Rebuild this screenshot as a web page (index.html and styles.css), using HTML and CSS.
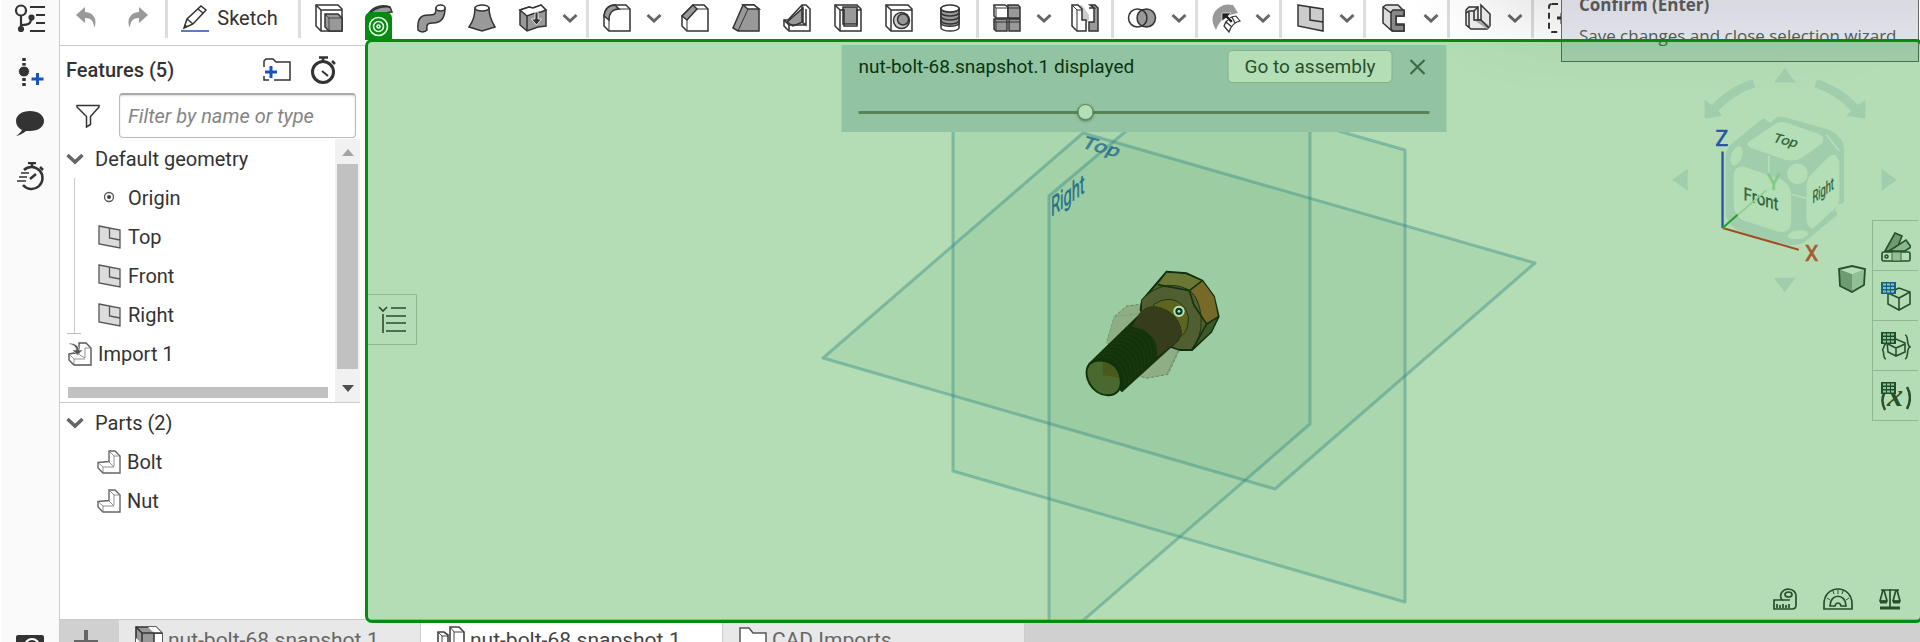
FILE: index.html
```html
<!DOCTYPE html>
<html lang="en">
<head>
<meta charset="utf-8">
<title>nut-bolt-68.snapshot.1</title>
<link rel="stylesheet" href="styles.css">
</head>
<body>
<svg class="defs" aria-hidden="true">
  <symbol id="chev" viewBox="0 0 16 10"><path d="M1.500 2l6.500 6 6.500-6" fill="none" stroke="#666" stroke-width="3"/></symbol>
  <symbol id="fold" viewBox="0 0 18 12"><path d="M1.500 2l7.500 7 7.500-7" fill="none" stroke="#666" stroke-width="3.500"/></symbol>
  <symbol id="plane" viewBox="0 0 24 24"><path d="M1 1l21 4v18l-21-4z" fill="#dcdcdc" stroke="#555" stroke-width="1.300"/><path d="M11.500 3v10l10.500 2" fill="none" stroke="#555" stroke-width="1.300"/></symbol>
  <symbol id="part" viewBox="0 0 24 24"><path d="M1 12.500l11-1V1h6l5 5v17H6l-5-5z" fill="#fff" stroke="#666" stroke-width="1.400"/><path d="M12 1l5 5h6M17 6v10M1 12.500L6 17v6M6 17h11l-5-5" fill="none" stroke="#777" stroke-width=".8"/></symbol>
  <symbol id="grid" viewBox="0 0 15 12"><path d="M0 0h15v12H0z" fill="currentColor"/><path d="M2 1.500h3v2H2zM6 1.500h3v2H6zM10 1.500h3v2h-3zM2 5h3v2H2zM6 5h3v2H6zM10 5h3v2h-3zM2 8.500h3v2H2zM6 8.500h3v2H6zM10 8.500h3v2h-3z" fill="#8dc4a0"/></symbol>
</svg>

<div class="app">
  <nav class="rail" aria-label="Document panels">
    <button class="rail-btn" aria-label="Versions and history"><svg width="32" height="30" viewBox="0 0 32 30" fill="none" stroke="#333" stroke-width="2.200"><circle cx="7" cy="7.500" r="5"/><path d="M7 12.500V25M7 22c9 0 10-2 10-7M16 4h15M22 12h9M22 20h9M16 28h15"/><circle cx="7" cy="26" r="2" fill="#333"/><circle cx="17.500" cy="14.500" r="2" fill="#333"/></svg></button>
    <button class="rail-btn" aria-label="Insert"><svg width="32" height="30" viewBox="0 0 32 30"><path d="M10 2v28" stroke="#333" stroke-width="3.500" stroke-dasharray="3 2"/><circle cx="10" cy="15.500" r="5.500" fill="#333" stroke="#fafafa"/><path d="M23.500 17v12M17.500 23h12" stroke="#1b53b5" stroke-width="3"/></svg></button>
    <button class="rail-btn" aria-label="Comments"><svg width="32" height="30" viewBox="0 0 32 30"><path d="M16 2c8 0 14 4 14 10s-6 10-14 10h-4c-3 2.500-6 4-10 5 3-2 5-4 6-6-4-2-6-5-6-9C2 6 8 2 16 2z" fill="#333"/></svg></button>
    <button class="rail-btn" aria-label="Performance"><svg width="32" height="30" viewBox="0 0 32 30" fill="none" stroke="#333" stroke-width="2.500"><path d="M10 8a11 11 0 1 1-1 15"/><path d="M14 1h8M18 1v4M26 5l3 3M16 17l6-5" /><path d="M7 11h8M5 15h8M3 19h9" stroke-width="1.500"/></svg></button>
    <button class="rail-btn rail-last" aria-label="Search"><svg width="28" height="28" viewBox="0 0 28 28"><rect width="28" height="28" rx="2" fill="#333"/><circle cx="16" cy="11" r="7" fill="none" stroke="#fff" stroke-width="2"/></svg></button>
  </nav>

  <div class="main">
    <header class="toolbar">
      <button class="tool" aria-label="Undo"><svg width="28" height="28" viewBox="0 0 28 28"><path d="M4 11l9-8v5c9 0 13 9 9 16 0-7-3-10-9-10v5z" fill="#999"/></svg></button>
      <button class="tool redo" aria-label="Redo"><svg width="28" height="28" viewBox="0 0 28 28"><path d="M24 11l-9-8v5c-9 0-13 9-9 16 0-7 3-10 9-10v5z" fill="#999"/></svg></button>
      <span class="sep"></span>
      <button class="sketch"><svg width="28" height="28" viewBox="0 0 28 28"><path d="M3 24l3-9L20 2l5 4-13 14zM6 15l6 5M17 5l5 4" fill="#fff" stroke="#333" stroke-width="1.500"/><path d="M3 24l1-4 2 2z" fill="#333"/><path d="M0 27h28" stroke="#1b53b5" stroke-width="1.500"/></svg>Sketch</button>
      <span class="sep"></span>
      <button class="tool" aria-label="Extrude"><svg class="ic" viewBox="0 0 28 28"><path d="M1 1h22l4 4v22H6l-5-5z" fill="#fff"/><path d="M1 1l5 5v21M6 6h21"/><path d="M10 10h13l4 4v13H14l-4-4z" fill="#999"/><path d="M10 10l4 4v13M14 14h13" stroke-width=".8"/></svg></button>
      <button class="tool" aria-label="Revolve"><svg class="ic" viewBox="0 0 28 28"><path d="M1 15C2 5 14-1 24 3l2 5c-7 0-9 3-10 8z" fill="#999"/><path d="M2 11c6-7 13-9 22-8"/></svg></button>
      <button class="tool" aria-label="Sweep"><svg class="ic" viewBox="0 0 28 28"><path d="M19 4c0 7-2 7-8 7C3 11 0 16 1 26c2 2.500 7 2.500 9 0-1-6 1-7 6-7 8 0 12-5 12-15z" fill="#999"/><ellipse cx="23.500" cy="4" rx="4.500" ry="3" fill="#fff"/></svg></button>
      <button class="tool" aria-label="Loft"><svg class="ic" viewBox="0 0 28 28"><path d="M7 4c0 9-3 15-6 19l13 4 13-4c-3-5-6-11-6-19z" fill="#999"/><ellipse cx="14" cy="4" rx="7" ry="3" fill="#fff"/></svg></button>
      <button class="tool" aria-label="Thicken"><svg class="ic" viewBox="0 0 28 28"><path d="M1 6l9-3 4 1 8-3 5 5v16l-8 1-11 4-7-6z" fill="#999"/><path d="M1 6l9-3 4 1 8-3 5 5-5 2-6 1-8 3z" fill="#fff"/><path d="M8 12v15"/><path d="M16 8h3v7h3.500l-5 6-5-6H16z" fill="#333" stroke="#fff" stroke-width=".8"/></svg></button>
      <button class="more" aria-label="More solid tools"><svg width="16" height="10"><use href="#chev"/></svg></button>
      <span class="sep"></span>
      <button class="tool" aria-label="Fillet"><svg class="ic" viewBox="0 0 28 28"><path d="M1 12C2 5 6 1 12 1h11l4 4v22H6l-5-5z" fill="#fff"/><path d="M1 12C2 5 6 1 12 1l4 4C10 5 6 9 6 16z" fill="#999"/><path d="M16 5h11M6 16v11" stroke-width="1"/></svg></button>
      <button class="more" aria-label="More edge tools"><svg width="16" height="10"><use href="#chev"/></svg></button>
      <button class="tool" aria-label="Chamfer"><svg class="ic" viewBox="0 0 28 28"><path d="M1 12L12 1h11l4 4v22H6l-5-5z" fill="#fff"/><path d="M1 12L12 1l4 4L6 16z" fill="#999"/><path d="M16 5h11M6 16v11" stroke-width="1"/></svg></button>
      <button class="tool" aria-label="Draft"><svg class="ic" viewBox="0 0 28 28"><path d="M1 24L11 1h11l5 4v22H6z" fill="#999"/><path d="M11 1l5 4h11l-5-4z" fill="#fff"/><path d="M16 5L6 27" stroke-width="1"/></svg></button>
      <button class="tool" aria-label="Rib"><svg class="ic" viewBox="0 0 28 28"><path d="M1 16h4L19 1h4l4 4v22H6l-5-5z" fill="#fff"/><path d="M4 18L20 4v14l-10 4z" fill="#999"/><path d="M19 1v17l4 3V5M1 16l5 5h17M6 21v6"/></svg></button>
      <button class="tool" aria-label="Shell"><svg class="ic" viewBox="0 0 28 28"><path d="M1 1h22l4 4v22H6l-5-5z" fill="#fff"/><path d="M9 3h14v17H9z" fill="#999"/><path d="M1 1l5 5v21M6 6h4v16h13V6h4M10 22V5"/></svg></button>
      <button class="tool" aria-label="Hole"><svg class="ic" viewBox="0 0 28 28"><path d="M1 1h22l4 4v22H6l-5-5z" fill="#fff"/><path d="M1 1l5 5v21M6 6h21"/><circle cx="16.500" cy="16.500" r="8" fill="#ccc"/><circle cx="18" cy="15.500" r="5.500" fill="#999"/></svg></button>
      <button class="tool" aria-label="External thread"><svg class="ic" viewBox="0 0 28 28"><path d="M5 5v19c2 4 16 4 18 0V5z" fill="#fff"/><path d="M5 5c3 4 15 4 18 0v15c-3 3-15 3-18 0z" fill="#999"/><ellipse cx="14" cy="4.500" rx="9" ry="3.500" fill="#fff"/><path d="M5 9c3 4 15 4 18 0M5 13c3 4 15 4 18 0M5 17c3 4 15 4 18 0"/></svg></button>
      <span class="sep"></span>
      <button class="tool" aria-label="Linear pattern"><svg class="ic" viewBox="0 0 28 28"><path d="M1 1h11l3 2v11H3l-2-2z" fill="#fff"/><path d="M15 1h10l2 2v11H15zM1 15h13v12H3l-2-2zM16 15h11v12H16z" fill="#999"/><path d="M1 1l2 3h11M3 4v10M15 4h12M1 15l2 3h24M3 18v9" stroke-width="1"/></svg></button>
      <button class="more" aria-label="More pattern tools"><svg width="16" height="10"><use href="#chev"/></svg></button>
      <button class="tool" aria-label="Mirror"><svg class="ic" viewBox="0 0 28 28"><path d="M9 1h2l7 10V4v12l-4 5-4-4z" fill="#ccc" stroke="none"/><path d="M1 1h6l4 4v11h4v11H6l-5-5z" fill="#fff"/><path d="M1 1l5 5v21M6 6h5" stroke-width="1"/><path d="M18 4h5l-4-3h5l3 3v23h-9v-9h5V4z" fill="#999"/></svg></button>
      <span class="sep"></span>
      <button class="tool" aria-label="Boolean"><svg class="ic" viewBox="0 0 28 28"><circle cx="18.500" cy="14" r="9" fill="#999"/><circle cx="9.500" cy="14" r="9" fill="#fff"/><path d="M14 6a9 9 0 0 1 0 16 9 9 0 0 1 0-16z" fill="#999"/></svg></button>
      <button class="more" aria-label="More boolean tools"><svg width="16" height="10"><use href="#chev"/></svg></button>
      <span class="sep"></span>
      <button class="tool" aria-label="Move face"><svg class="ic" viewBox="0 0 28 28"><path d="M4 26C-2 16 0 8 8 3c4-3 8-3 13-2l5 8-8 2c-7 3-11 7-14 15z" fill="#999" stroke="none"/><path d="M12 22c2-6 7-10 12-10l4 5c-5 1-9 5-11 11zM20 13l3 6M14 18l6 5" fill="#fff" stroke-width="1.200"/><path d="M10 9h9l-3 3 5 5-2 2-5-5-4 3z" fill="#222" stroke="#fff" stroke-width=".6"/></svg></button>
      <button class="more" aria-label="More face tools"><svg width="16" height="10"><use href="#chev"/></svg></button>
      <span class="sep"></span>
      <button class="tool" aria-label="Plane"><svg class="ic" viewBox="0 0 28 28"><path d="M2 1l25 4v22L2 22z" fill="#ccc"/><path d="M14 3v13l13 2"/></svg></button>
      <button class="more" aria-label="More construction tools"><svg width="16" height="10"><use href="#chev"/></svg></button>
      <span class="sep"></span>
      <button class="tool" aria-label="Frame"><svg class="ic" viewBox="0 0 28 28"><path d="M3 3l3-2h12l6 6v5h-8v8h8v7H12l-9-8z" fill="#ddd"/><path d="M11 8l2-2h11v6h-8v9h8v6H13l-2-2z" fill="#888"/><path d="M3 3l8 6"/></svg></button>
      <button class="more" aria-label="More frame tools"><svg width="16" height="10"><use href="#chev"/></svg></button>
      <span class="sep"></span>
      <button class="tool" aria-label="Sheet metal"><svg class="ic" viewBox="0 0 28 28"><path d="M2 6l3-3h9v13h3V1l9 9v12l-3 3H7l-5-4z" fill="#eee"/><path d="M10 16h7l9 6-3 3z" fill="#aaa" stroke="none"/><path d="M14 3l-4 4H5l-3 2M5 8v16M10 7v9h7l8 8"/></svg></button>
      <button class="more" aria-label="More sheet metal tools"><svg width="16" height="10"><use href="#chev"/></svg></button>
      <span class="sep"></span>
      <button class="tool" aria-label="Custom feature"><svg class="ic" viewBox="0 0 28 28"><rect x="1" y="0" width="28" height="28" rx="3" stroke-width="2" stroke-dasharray="6 4"/><path d="M9 14h12M14 9v11" stroke-width="3"/></svg></button>
    </header>

    <div class="work">
      <aside class="panel">
        <div class="features">
          <div class="phead"><h2>Features (5)</h2>
            <button aria-label="Add folder"><svg width="28" height="24" viewBox="0 0 28 24"><path d="M1 9V3l2-2h7l3 3h14v18H11M1 18v4h5" fill="none" stroke="#333" stroke-width="1.500"/><path d="M8 8v12M2 14h12" stroke="#1b53b5" stroke-width="3"/></svg></button>
            <button aria-label="Regeneration times"><svg width="28" height="28" viewBox="0 0 28 28" fill="none" stroke="#333" stroke-width="3"><circle cx="14" cy="16" r="10.500"/><path d="M10 1.500h9M14 1v4M23 5l3 3" stroke-width="2.500"/><path d="M13 15l6 5" stroke-width="2"/></svg></button>
          </div>
          <div class="filter">
            <svg width="24" height="24" viewBox="0 0 24 24"><path d="M1 1.500h22v1.500l-8.500 9.500v8l-4 2.500V12.500L1 3z" fill="#fff" stroke="#333" stroke-width="1.500"/></svg>
            <input type="text" aria-label="Filter features" placeholder="Filter by name or type">
          </div>
          <div class="treebox">
            <div class="treecol">
              <ul class="tree">
                <li class="row top"><svg width="18" height="12"><use href="#fold"/></svg>Default geometry</li>
                <li class="branch"><ul>
                  <li class="row"><svg width="24" height="24" viewBox="0 0 24 24"><circle cx="11" cy="11" r="4.500" fill="none" stroke="#555" stroke-width="1.300"/><circle cx="11" cy="11" r="2" fill="#444"/></svg>Origin</li>
                  <li class="row"><svg width="24" height="24"><use href="#plane"/></svg>Top</li>
                  <li class="row"><svg width="24" height="24"><use href="#plane"/></svg>Front</li>
                  <li class="row"><svg width="24" height="24"><use href="#plane"/></svg>Right</li>
                </ul></li>
                <li class="row import"><svg width="24" height="24" viewBox="0 0 24 24"><path d="M1 12l5-1 5 1V1h7l5 5v17H6l-5-5z" fill="#fff" stroke="#555" stroke-width="1.400"/><path d="M17 6v10l-5-3M17 6h6M1 12l5 5h11M6 17v6" fill="none" stroke="#777" stroke-width=".8"/><path d="M1 1c6 0 10 3 10 7h4l-5.500 5L4 8h4c0-3-2-5-7-6z" fill="#555" stroke="#fff" stroke-width=".6"/></svg>Import 1</li>
              </ul>
              <div class="hbar"></div>
            </div>
            <div class="vbar"><svg width="12" height="7"><path d="M6 0l6 7H0z" fill="#a3a3a3"/></svg><span></span><svg width="12" height="7"><path d="M6 7l6-7H0z" fill="#505050"/></svg></div>
          </div>
        </div>
        <ul class="tree">
          <li class="row top"><svg width="18" height="12"><use href="#fold"/></svg>Parts (2)</li>
          <li class="row kid"><svg width="24" height="24"><use href="#part"/></svg>Bolt</li>
          <li class="row kid"><svg width="24" height="24"><use href="#part"/></svg>Nut</li>
        </ul>
      </aside>

      <main class="view">
        <svg class="scene" viewBox="368 42 1552 578" preserveAspectRatio="xMidYMid slice">
          <g fill="#5a9a70" fill-opacity=".09" stroke="#2f8585" stroke-opacity=".4" stroke-width="3" stroke-linejoin="round">
            <path d="M953 100h265l187 50v452L953 471z" stroke="none"/>
            <path d="M1300 120l105 30v452L953 471V120" fill="none"/>
            <path d="M1083 133l452 130-260 226-452-131z"/>
            <path d="M1310 100v324L1049 650V196l102-86"/>
          </g>
          <g class="lab" fill="#26708a" stroke="#26708a" stroke-width=".5">
            <text transform="matrix(1.150 .32 -.5 .8 1080 147)" font-size="19" fill="#3f8794">Top</text>
            <text transform="matrix(.540 -.4 0 1 1051 217)" font-size="27">Right</text>
          </g>
          <g transform="translate(1060 250) scale(.3333)">
            <path d="M163 200l37-32 100-12 66 52 2 70-44 95-65 12-60-20-58-90z" fill="#8fae86" stroke="#4b6b48" stroke-width="2" stroke-dasharray="10 5"/>
            <path d="M163 200l-20 70M163 200l75-8 100 20 30 60-48 100" fill="none" stroke="#6f9670" stroke-width="2"/>
            <path d="M143 270l20-70 75-8-100 90z" fill="#8fae86"/>
            <path d="M320 65l60 5 47 22 35 48 14 60-22 45-58 55h-35l-60-20-59-100 4-28z" fill="#535f2c" stroke="#0f3010" stroke-width="6" stroke-linejoin="round"/>
            <path d="M320 68l57 5 47 20-36 28-92-18z" fill="#6b7835"/><path d="M427 93l35 48 12 60-35 20-40-55-10-44z" fill="#776a28"/>
            <path d="M438 224l34-20-20 42-56 50z" fill="#3d5928"/>
            <path d="M245 150c50-55 110-50 144-28 40 30 50 130 5 176l-40-2-50-20-57-100z" fill="#515e31"/>
            <path d="M245 150c50-55 110-50 144-28 40 30 50 130 5 176" fill="none" stroke="#18370f" stroke-width="3"/>
            <path d="M294 104l94 18 39-30M388 122l14 44 38 56-42 75M440 222l36-22" fill="none" stroke="#14340f" stroke-width="5"/>
            <path d="M280 165c40-30 90-20 105 35 0 40-10 50-30 65z" fill="#5f6420" stroke="#1d380d" stroke-width="3"/>
            <path d="M86 340l170-165c40-20 105 15 110 75l-10 22-170 155z" fill="#12330c"/>
            <path d="M238 190l18-15c40-20 105 15 110 75l-15 25-60 45c5-50-20-80-75-90z" fill="#373d1c"/>
            <g fill="none" stroke="#203f13" stroke-width="2"><path d="M105 325c50-20 95 20 90 85M115 315c50-20 95 20 90 85M125 305c50-20 95 20 90 85M135 295c50-20 95 20 90 85M145 285c50-20 95 20 90 85M155 275c50-20 95 20 90 85M165 265c50-20 95 20 90 85M175 255c50-20 95 20 90 85M185 245c50-20 95 20 90 85M195 235c50-20 95 20 90 85"/></g>
            <path d="M88 342c25-20 75-12 90 30 15 45-10 65-35 64-45 0-80-60-55-94z" fill="#4a6930" stroke="#0e3209" stroke-width="6"/>
            <path d="M128 335c30 4 47 25 50 48l-50-8z" fill="#48591a"/>
            <circle cx="357" cy="184" r="14" fill="#123a18" stroke="#b7e3c5" stroke-width="6"/><circle cx="357" cy="184" r="4" fill="#b7e3c5"/>
          </g>
        </svg>

        <div class="badge"><svg width="21" height="21" viewBox="0 0 21 21" fill="none" stroke="#e9ffe9" stroke-width="1.600"><circle cx="10.500" cy="10.500" r="9"/><circle cx="10.500" cy="10.500" r="5"/><circle cx="10.500" cy="10.500" r="1.500"/></svg></div>

        <section class="notice">
          <div class="nrow"><span>nut-bolt-68.snapshot.1 displayed</span><button class="go">Go to assembly</button><button class="close" aria-label="Close"><svg width="16" height="16" viewBox="0 0 16 16"><path d="M1 1l14 14M15 1L1 15" stroke="#3d6b48" stroke-width="2.200"/></svg></button></div>
          <input type="range" aria-label="Snapshot position" min="0" max="200" value="79">
        </section>

        <button class="listbtn" aria-label="Show feature list"><svg width="28" height="28" viewBox="0 0 28 28" fill="none" stroke="#27502b" stroke-width="1.600"><path d="M1 1l4 4 4-4M13 2h15M8 10h20M8 17h20M8 25h20M5 8v19"/></svg></button>

        <svg class="cube" viewBox="0 0 700 700" aria-label="View cube">
          <g fill="#a0ceac">
            <path d="M435 54l33 44h-66zM435 728l33-44h-66zM97 390l46-33v66zM772 390l-46-33v66z"/>
            <path d="M338 88l8 24c-45 15-75 35-110 70l10 16-52 8V150l22 15c35-37 75-62 122-77zM532 88l-8 24c45 15 75 35 110 70l-14 16 57 8V150l-22 15c-35-37-75-62-123-77z"/>
            <path d="M365 208q10-6 18 7l12 3q12-22 40-16l125 35q50 18 53 60v155q0 10-20 12l-7 18q10 6 4 16l-95 78q-22 14-55 8l-130-35q-48-18-53-60V320q2-25 20-40z"/>
          </g>
          <g fill="#b4deb6">
            <path d="M338 268l70-47q15-8 35-2l90 32q30 12 10 32l-55 40q-22 14-55 6l-95-33q-30-12 0-28z"/>
            <path d="M310 350q-28 0-28 28v90q2 35 32 45l100 32q38 8 40-28v-82q-2-35-35-48z"/>
            <path d="M588 316q-12-4-24 8l-45 45q-19 18-19 42v95q2 28 20 30l65-60q14-14 14-34V335z"/>
            <circle cx="473" cy="372" r="31"/><ellipse cx="290" cy="318" rx="16" ry="30" transform="rotate(20 290 318)"/><ellipse cx="474" cy="555" rx="31" ry="13" transform="rotate(-8 474 555)"/>
          </g>
          <path d="M387 318v50M457 434l42 11M560 255l38 48" stroke="#b4deb6" stroke-width="5"/>
          <g class="lab" fill="#31623b" stroke="#31623b" stroke-width="1">
            <text transform="matrix(.8 .2 -.35 .65 396 275)" font-size="54">Top</text>
            <text transform="matrix(.84 .26 0 1 311 450)" font-size="54">Front</text>
            <text transform="matrix(.54 -.38 0 1 518 462)" font-size="52">Right</text>
          </g>
          <path d="M248 535V305" stroke="#2a53a4" stroke-width="7"/><path d="M248 535l229 65" stroke="#a14e25" stroke-width="6"/>
          <path d="M248 535l132-114" stroke="#8fd08e" stroke-width="5"/><path d="M248 535l45-40" stroke="#25a02b" stroke-width="6"/>
          <g class="lab" font-size="64" stroke-width="2"><text x="227" y="288" fill="#2a53a4" stroke="#2a53a4">Z</text><text x="382" y="420" fill="#83cb85" stroke="#83cb85">Y</text><text x="496" y="634" fill="#a85a32" stroke="#a85a32">X</text></g>
        </svg>

        <button class="shade" aria-label="Shaded view"><svg width="28" height="28" viewBox="0 0 28 28"><path d="M1 4l13 5v18L2 21z" fill="#6f9b70"/><path d="M27 4L14 9v18l12-7z" fill="#92bf94"/><path d="M1 4l13-3 13 3-13 5z" fill="#b4deb6"/><path d="M1 4l13-3 13 3-1 16-12 7-12-6z" fill="none" stroke="#27502b" stroke-width="1.800"/></svg></button>

        <div class="side">
          <button aria-label="Appearances"><svg class="gi" viewBox="0 0 30 30"><path d="M4 19L14 1l7 3-6 15z" fill="#6f9b70"/><path d="M8 19l17-11 5 7-6 4z" fill="#8ab88d"/><rect x="1" y="20" width="28" height="9" rx="1.500"/><path d="M11 20h9v9h-9z" fill="#92bf94" stroke-width=".8"/><circle cx="5.500" cy="24.500" r="1.500"/></svg></button>
          <button aria-label="Configurations"><svg class="gi blue" viewBox="0 0 30 30"><path d="M7 11l11-5 11 4v12l-11 6-11-6zM7 11l11 5 11-6M18 16v12"/><use href="#grid" width="15" height="12"/></svg></button>
          <button aria-label="Configured features"><svg class="gi" viewBox="0 0 30 30"><path d="M6 10l9-3 9 4v9l-9 4-8-4zM7 12l8 4 9-4M15 16v8M5 12c-3 0-1 5-4 6 3 0 0 8 4 9M24 3c4 0 1 10 5 12-4 1-1 11-5 12"/><use href="#grid" width="15" height="12"/></svg></button>
          <button aria-label="Variables"><svg class="gi" viewBox="0 0 30 30"><path d="M4 10c-4 6-3 12 0 18M26 5c4 7 4 14 0 22" stroke-width="2.500"/><text x="6" y="24">x</text><use href="#grid" width="15" height="12"/></svg></button>
        </div>

        <div class="measure">
          <button aria-label="Measure"><svg class="mi" width="24" height="22" viewBox="0 0 24 22"><path d="M1 12h8c-3-4-1-10 6-11 6 0 8 4 8 7v9q0 4-4 4H1z"/><ellipse cx="15.500" cy="6.500" rx="3.500" ry="2.500"/><path d="M4 20v-4M7 20v-3M10 20v-4M13 20v-3M16 20v-4M9 12h8"/></svg></button>
          <button aria-label="Angle"><svg class="mi" width="30" height="22" viewBox="0 0 30 22"><path d="M1 21v-5C1-4 29-4 29 16v5zM7 18c0-13 16-13 16 0H18c-1-4-5-4-6 0z"/><path d="M15 2v4M10 3l1 3M20 3l-1 3M4 10l3 2M26 10l-3 2" stroke-width="1"/></svg></button>
          <button aria-label="Mass properties"><svg class="mi" width="22" height="22" viewBox="0 0 22 22"><path d="M2 2h18M11 1v18M4 2L1 13h7L5 2M17 2l-3 11h7L18 2"/><path d="M1 14h7M14 14h7M1 20h20" stroke-width="3"/></svg></button>
        </div>
      </main>
    </div>

    <footer class="tabs">
      <button class="add" aria-label="Add tab"><svg width="24" height="24" viewBox="0 0 24 24"><path d="M12 0v24M0 12h24" stroke="#666" stroke-width="4"/></svg></button>
      <a class="tab" href="#assembly"><svg width="28" height="28" viewBox="0 0 28 28"><path d="M1 1h20l6 6v20H7l-6-6z" fill="#999" stroke="#333" stroke-width="1.600"/><path d="M13 1h8l6 6h-8zM19 8h8v19h-8zM1 12l6 6v9l-6-6z" fill="#fff"/><path d="M1 1l6 6h20M7 7v20M19 7v20" fill="none" stroke="#333" stroke-width="1.500"/></svg>nut-bolt-68.snapshot.1</a>
      <a class="tab on" href="#part"><svg width="28" height="28" viewBox="0 0 28 28"><path d="M1 6h6l4 3v18H5l-4-4zM13 1h9l5 5v21H16l-3-3z" fill="#fff" stroke="#444" stroke-width="1.600"/><path d="M1 6l4 4v17M13 1l4 5v21M17 6h10M5 10h6M11 17h4" fill="none" stroke="#444"/></svg>nut-bolt-68.snapshot.1</a>
      <a class="tab" href="#imports"><svg width="28" height="26" viewBox="0 0 28 26"><path d="M1 25V1h9l4 5h13v19z" fill="#fff" stroke="#555" stroke-width="1.500"/></svg>CAD Imports</a>
    </footer>
  </div>
  <div class="tip" role="tooltip"><strong>Confirm (Enter)</strong><span>Save changes and close selection wizard.</span></div>
</div>
</body>
</html>
```
FILE: styles.css
```css
* { box-sizing: border-box; }
body { margin: 0; font: 20px/24px Roboto, "Liberation Sans", sans-serif; color: #333; overflow: hidden; background: #fff; }
button { border: 0; padding: 0; margin: 0; background: none; font: inherit; color: inherit; display: flex; align-items: center; justify-content: center; }
ul { list-style: none; margin: 0; padding: 0; }
svg { display: block; flex: none; }
.defs { position: absolute; width: 0; height: 0; }
.app { display: flex; height: 100vh; position: relative; overflow: hidden; }

.rail { width: 60px; flex: none; display: flex; flex-direction: column; align-items: center; gap: 23px; padding: 3px 1px 0 0; background: #fafafa; border-left: 2px solid #fff; border-right: 1px solid #ccc; overflow: hidden; }
.rail-btn { height: 30px; flex: none; }
.rail-last { margin-top: auto; margin-bottom: -22px; }

.main { flex: 1; min-width: 0; display: flex; flex-direction: column; }
.toolbar { display: flex; height: 45px; flex: none; overflow: hidden; }
.tool { width: 51px; height: 36px; flex: none; }
.redo { width: 53px; }
.ic { width: 28px; height: 28px; fill: none; stroke: #333; stroke-width: 1.500; overflow: visible; }
.more { width: 23px; height: 36px; margin-right: 4px; flex: none; }
.sep { width: 3px; height: 38px; margin: 0 2px 0 1px; background: #ddd; flex: none; }
.sketch { width: 127px; height: 36px; gap: 8px; padding-right: 8px; flex: none; font-size: 20px; }

.work { flex: 1; min-height: 0; display: flex; }
.panel { width: 305px; flex: none; border-top: 1px solid #ccc; }
.features { border-bottom: 1px solid #ccc; margin-right: 5px; }
.phead { display: flex; align-items: center; height: 47px; padding: 0 23px 0 6px; gap: 18px; }
.phead h2 { margin: 0 auto 0 0; font-size: 20px; font-weight: 500; }
.filter { display: flex; align-items: center; gap: 19px; padding: 0 4px 0 16px; }
.filter input { flex: 1; min-width: 0; height: 45px; border: 1px solid #bbb; border-top: 2px solid #aaa; border-radius: 4px; padding: 0 8px; font: italic 20px Roboto, sans-serif; color: #333; box-shadow: inset 0 1px 2px #ddd; }
.filter input::placeholder { color: #858585; }
.treebox { display: flex; margin-top: 1px; }
.treecol { flex: 1; }
.row { display: flex; align-items: center; height: 39px; gap: 6px; }
.row.top { gap: 11px; padding-left: 6px; }
.branch { margin-left: 14px; padding-left: 23px; border-left: 1px solid #ccc; position: relative; }
.branch::after { content: ""; position: absolute; left: -8px; bottom: 0; width: 14px; height: 1px; background: #bbb; }
.import { padding-left: 8px; }
.hbar { height: 11px; margin: 14px 7px 4px 8px; background: #c1c1c1; }
.vbar { width: 25px; background: #f1f1f1; display: flex; flex-direction: column; align-items: center; gap: 8px; padding: 10px 0; }
.vbar span { width: 21px; height: 205px; background: #c1c1c1; }
.vbar svg:last-child { margin-top: auto; }
.kid { padding-left: 37px; }

.view { position: relative; z-index: 2; flex: 1; min-width: 0; margin: -6px -3px -4px 0; border: 3px solid #088a12; border-radius: 7px; background: rgba(5, 141, 10, .3); }
.scene { position: absolute; inset: 0; width: 100%; height: 100%; }
.lab { font-family: Roboto, sans-serif; }
.badge { position: absolute; left: -3px; top: -30px; width: 27px; height: 28px; border-radius: 6px 6px 0 0; background: #088a12; display: flex; align-items: center; justify-content: center; }
.notice { position: absolute; left: 50%; top: 3px; width: 605px; transform: translateX(-50%); padding: 5px 17px 10px; background: #92c4a3; color: #0b330f; font-size: 19px; }
.nrow { display: flex; align-items: center; gap: 17px; }
.nrow span { flex: 1; }
.go { height: 33px; padding: 0 16px; border: 1px solid #86b088; border-radius: 5px; background: #b4deb6; color: #27502b; }
.close { margin-right: 4px; }
.notice input { display: block; width: 100%; height: 20px; margin: 19px 0 0; appearance: none; background: linear-gradient(#5a8458, #5a8458) center / 100% 3px no-repeat; }
.notice input::-webkit-slider-thumb { appearance: none; width: 16px; height: 16px; border-radius: 50%; background: #b4deb6; border: 1px solid #5a8458; box-shadow: 0 1px 3px #456f45; }
.listbtn { position: absolute; left: 0; top: 252px; width: 49px; height: 51px; border: 1px solid #8fb890; border-left: 0; }
.cube { position: absolute; right: 47px; top: 8px; width: 233px; height: 233px; overflow: visible; }
.shade { position: absolute; right: 54px; top: 223px; }
.side { position: absolute; right: 2px; top: 178px; width: 46px; border: 1px solid #8fb890; border-right: 0; border-bottom: 0; }
.side button { width: 100%; height: 50px; padding-top: 3px; border-bottom: 1px solid #8fb890; }
.gi { width: 30px; height: 30px; fill: none; stroke: #27502b; stroke-width: 1.600; color: #1f4f28; }
.gi use { stroke: none; }
.gi text { font: italic bold 32px "Liberation Serif", serif; fill: #27502b; stroke: none; }
.blue { color: #14628c; }
.measure { position: absolute; right: 19px; bottom: 10px; display: flex; gap: 26px; }
.mi { fill: none; stroke: #27502b; stroke-width: 1.700; }

.tabs { display: flex; height: 23px; flex: none; overflow: hidden; background: #d0d0d0; border-top: 1px solid #ccc; color: #666; }
.add { width: 59px; height: 44px; padding-right: 8px; flex: none; }
.tab { display: flex; align-items: center; width: 302px; height: 40px; padding: 0 16px; gap: 5px; background: #e8e8e8; border-right: 1px solid #ccc; color: #666; font-size: 21px; text-decoration: none; flex: none; }
.on { background: #fff; color: #444; }

.tip { position: absolute; z-index: 1; right: 1px; top: -22px; height: 84px; padding: 10px 17px; border: 1px solid #666; background: linear-gradient(#d6d6dd, #e2e4ec); font: 17px/31px "Open Sans", "Noto Sans", sans-serif; color: #575757; display: flex; flex-direction: column; box-shadow: -70px -60px 90px rgba(0, 0, 0, .2); }
```
